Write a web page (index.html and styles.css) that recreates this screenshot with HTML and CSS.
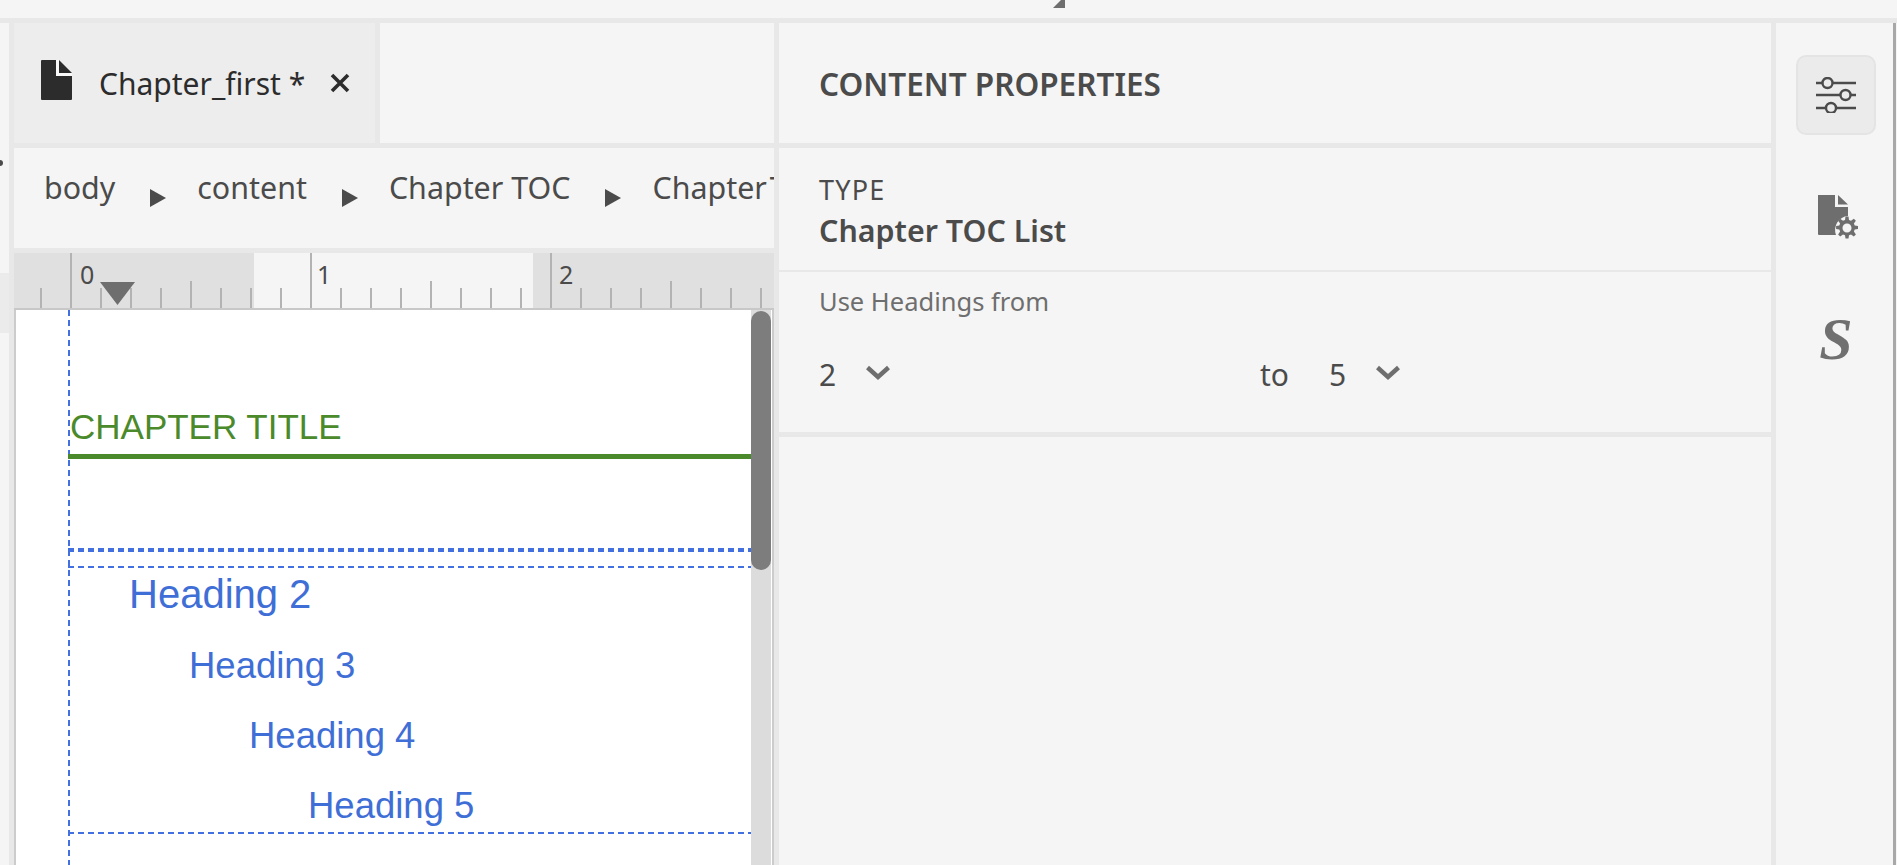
FILE: index.html
```html
<!DOCTYPE html>
<html lang="en">
<head>
<meta charset="utf-8">
<title>Chapter_first</title>
<link rel="stylesheet" href="styles.css">
</head>
<body>
<header class="topbar">
  <svg class="corner" width="12" height="8" viewBox="0 0 12 8"><path d="M0 8 8 0h4v8z" fill="#6e6e6e"/></svg>
</header>
<div class="workspace">
  <aside class="left-strip">
    <span class="strip-dot"></span>
    <div class="strip-dark"></div>
  </aside>
  <main class="editor">
    <div class="tabs">
      <div class="tab">
        <svg class="tab-icon" width="31" height="40" viewBox="0 0 31 40"><path d="M1 0h14v16h16v23a1 1 0 0 1-1 1H1a1 1 0 0 1-1-1V1a1 1 0 0 1 1-1z" fill="#2c2c2c"/><path d="M15 0h3v13h13v3H15z" fill="#fafafa"/><path d="M18 0l13 13H18z" fill="#2c2c2c"/></svg>
        <span class="tab-name">Chapter_first *</span>
        <svg class="tab-close" width="20" height="20" viewBox="0 0 20 20"><path d="M2 2l16 16M18 2 2 18" stroke="#2c2c2c" stroke-width="3.6" fill="none"/></svg>
      </div>
      <div class="tab-rest"></div>
    </div>
    <nav class="crumbs">
      <span>body</span><i class="tri"></i>
      <span>content</span><i class="tri"></i>
      <span>Chapter TOC</span><i class="tri"></i>
      <span class="crumb-last">Chapter TOC List</span>
    </nav>
    <svg class="ruler" width="760" height="57" viewBox="14 253 760 57">
      <rect x="14" y="253" width="760" height="57" fill="#e0e0e0"/>
      <rect x="254" y="253" width="279" height="55" fill="#f5f5f5"/>
      <rect x="14" y="308" width="760" height="2" fill="#c8c8c8"/>
      <g fill="#b3b3b3">
        <rect x="40" y="288" width="2" height="20"/><rect x="70" y="253" width="2" height="55"/><rect x="100" y="288" width="2" height="20"/><rect x="130" y="288" width="2" height="20"/><rect x="160" y="288" width="2" height="20"/><rect x="190" y="281" width="2" height="27"/><rect x="220" y="288" width="2" height="20"/><rect x="250" y="288" width="2" height="20"/><rect x="280" y="288" width="2" height="20"/><rect x="310" y="253" width="2" height="55"/><rect x="340" y="288" width="2" height="20"/><rect x="370" y="288" width="2" height="20"/><rect x="400" y="288" width="2" height="20"/><rect x="430" y="281" width="2" height="27"/><rect x="460" y="288" width="2" height="20"/><rect x="490" y="288" width="2" height="20"/><rect x="520" y="288" width="2" height="20"/><rect x="550" y="253" width="2" height="55"/><rect x="580" y="288" width="2" height="20"/><rect x="610" y="288" width="2" height="20"/><rect x="640" y="288" width="2" height="20"/><rect x="670" y="281" width="2" height="27"/><rect x="700" y="288" width="2" height="20"/><rect x="730" y="288" width="2" height="20"/><rect x="760" y="288" width="2" height="20"/>
      </g>
      <g class="ruler-num">
        <text x="80" y="284">0</text><text x="317" y="284">1</text><text x="559" y="284">2</text>
      </g>
      <path d="M100 282h35l-17.500 23z" fill="#6e6e6e"/>
    </svg>
    <div class="page-wrap">
      <article class="page">
        <div class="doc">
          <h1 class="chapter-title">CHAPTER TITLE</h1>
          <div class="thick-rule"></div>
          <div class="toc">
            <p class="h2">Heading 2</p>
            <p class="h3">Heading 3</p>
            <p class="h4">Heading 4</p>
            <p class="h5">Heading 5</p>
          </div>
        </div>
      </article>
      <div class="scrollbar"><div class="thumb"></div></div>
    </div>
  </main>
  <section class="props">
    <h2 class="props-head">CONTENT PROPERTIES</h2>
    <div class="props-type">
      <div class="type-label">TYPE</div>
      <div class="type-name">Chapter TOC List</div>
    </div>
    <div class="props-use">
      <div class="use-label">Use Headings from</div>
      <div class="use-row">
        <div class="pick pick-from"><span>2</span>
          <svg class="chev" width="26" height="15" viewBox="0 0 26 15"><path d="M2.500 2.500 13 12 23.500 2.500" stroke="#6e6e6e" stroke-width="4.400" fill="none"/></svg>
        </div>
        <span class="to">to</span>
        <div class="pick pick-to"><span>5</span>
          <svg class="chev" width="26" height="15" viewBox="0 0 26 15"><path d="M2.500 2.500 13 12 23.500 2.500" stroke="#6e6e6e" stroke-width="4.400" fill="none"/></svg>
        </div>
      </div>
    </div>
    <div class="props-rest"></div>
  </section>
  <aside class="rail">
    <button class="rail-btn is-active" type="button">
      <svg width="40" height="36" viewBox="0 0 40 36" fill="none" stroke="#4b4b4b" stroke-width="2.400"><path d="M0 6h6M17 6h23M0 18h24M35 18h5M0 31h9M20 31h20"/><circle cx="11.500" cy="6" r="5"/><circle cx="29.500" cy="18" r="5"/><circle cx="15" cy="31" r="5"/></svg>
    </button>
    <button class="rail-btn rail-doc" type="button">
      <svg width="40" height="45" viewBox="0 0 40 45"><path d="M0 0h17v12h13v9a14 14 0 0 0-12 19H1a1 1 0 0 1-1-1zM20 0l10 9.500H20z" fill="#6e6e6e"/><path transform="translate(1 1.500)" d="M26.500 20h3l.5 3.400 2 .8 2.800-2 2.100 2.100-2 2.800.8 2 3.300.5v3l-3.300.5-.8 2 2 2.800-2.100 2.100-2.800-2-2 .8-.5 3.200h-3l-.5-3.200-2-.8-2.800 2-2.100-2.100 2-2.800-.8-2-3.200-.5v-3l3.200-.5.8-2-2-2.800 2.100-2.100 2.800 2 2-.8zM28 27a4.500 4.500 0 1 0 0 9 4.500 4.500 0 0 0 0-9z" fill="#6e6e6e" fill-rule="evenodd"/></svg>
    </button>
    <button class="rail-btn rail-s" type="button">S</button>
  </aside>
  <div class="edge"></div>
  <div class="edge-end"></div>
</div>
</body>
</html>
```
FILE: styles.css
```css
* { box-sizing: border-box; }
html, body { margin: 0; height: 100%; }
body {
  width: 1897px; height: 865px; overflow: hidden;
  background: #e8e8e8; color: #4b4b4b;
  font-family: "Noto Sans", "Liberation Sans", sans-serif;
  display: flex; flex-direction: column;
}
.topbar {
  height: 18px; flex: none; background: #f5f5f5; margin-bottom: 5px;
  display: flex; justify-content: flex-start; padding-left: 1053px;
}
.workspace { flex: 1; display: flex; min-height: 0; }
.left-strip { width: 9px; flex: none; margin-right: 5px; background: #f5f5f5; display: flex; flex-direction: column; position: relative; }
.strip-dot { position: absolute; left: 0; top: 137px; width: 3px; height: 6px; background: #4b4b4b; border-radius: 0 3px 3px 0; }
.strip-dark { margin-top: 250px; height: 60px; background: #ebebeb; }

.editor { width: 760px; flex: none; display: flex; flex-direction: column; min-height: 0; }
.tabs { height: 120px; flex: none; display: flex; gap: 5px; margin-bottom: 5px; }
.tab { width: 361px; background: #ededed; display: flex; align-items: center; padding-left: 27px; }
.tab-icon { flex: none; margin: 0 27px 6px 0; }
.tab-name { font-size: 30px; color: #2c2c2c; width: 231px; flex: none; padding-top: 1px; }
.tab-close { flex: none; }
.tab-rest { flex: 1; background: #f5f5f5; }
.crumbs {
  height: 100px; flex: none; margin-bottom: 5px; background: #f5f5f5;
  display: flex; align-items: center; padding: 0 0 22px 30px; gap: 33px;
  overflow: hidden; white-space: nowrap; font-size: 30.4px; color: #4b4b4b;
}
.crumbs span { flex: none; }
.crumb-last { word-spacing: -5px; }
.tri { flex: none; width: 0; height: 0; margin: 22px -2px 0 2px; border-left: 16px solid #4b4b4b; border-top: 9px solid transparent; border-bottom: 9px solid transparent; }
.ruler { display: block; flex: none; }
.ruler-num { font-family: "Noto Sans", sans-serif; font-size: 25px; fill: #4b4b4b; }

.page-wrap { flex: 1; min-height: 0; display: flex; position: relative; background: #fff; border-left: 2px solid #ccc; border-right: 2px solid #ccc; }
.page { flex: 1; padding-left: 52px; overflow: hidden; }
.doc {
  min-height: 100%; padding-top: 97px; margin-right: 21px;
  background: repeating-linear-gradient(to bottom, #4270e0 0 6px, transparent 6px 10px) left top / 2px 100% no-repeat;
}
.chapter-title { margin: 0; padding-left: 2px; font: 400 35px/40px "Liberation Sans", Arial, sans-serif; color: #4b8a2b; }
.thick-rule { height: 5px; margin: 7px 0 107px; background: #4b8a2b; position: relative; }
.thick-rule::after { content: ""; position: absolute; left: 0; right: 0; top: 94px; height: 4px; background: repeating-linear-gradient(to right, #4270e0 0 6px, transparent 6px 10px); }
.toc {
  height: 268px; font-family: "Liberation Sans", Arial, sans-serif; color: #3f6fd6;
  background:
    repeating-linear-gradient(to right, #4270e0 0 6px, transparent 6px 10px) left top / 100% 2px no-repeat,
    repeating-linear-gradient(to right, #4270e0 0 6px, transparent 6px 10px) left bottom / 100% 2px no-repeat;
}
.toc p { margin: 0; white-space: nowrap; }
.h2 { font-size: 40px; line-height: 48px; padding: 4px 0 0 61px; }
.h3 { font-size: 36.5px; line-height: 42px; padding: 27px 0 0 121px; }
.h4 { font-size: 36.5px; line-height: 42px; padding: 28px 0 0 181px; }
.h5 { font-size: 36.5px; line-height: 42px; padding: 28px 0 0 240px; }
.scrollbar { position: absolute; right: 1px; top: 0; bottom: 0; width: 20px; background: #dcdcdc; }
.thumb { height: 259px; margin-top: 1px; background: #7d7d7d; border-radius: 10px; }

.props { width: 992px; flex: none; margin-left: 5px; display: flex; flex-direction: column; }
.props-head { height: 120px; margin: 0 0 5px; flex: none; background: #f5f5f5; display: flex; align-items: center; padding: 1px 0 0 40px; font-size: 31.500px; font-weight: 600; color: #4b4b4b; white-space: nowrap; }
.props-type { height: 124px; flex: none; background: #f5f5f5; padding: 24px 0 0 40px; border-bottom: 2px solid #e8e8e8; }
.type-label { font-size: 27px; line-height: 36px; letter-spacing: 1.200px; }
.type-name { font-size: 30.400px; font-weight: 600; line-height: 40px; margin-top: 3px; }
.props-use { height: 160px; flex: none; background: #f5f5f5; margin-bottom: 5px; padding: 11px 0 0 40px; }
.use-label { font-size: 25.500px; line-height: 36px; color: #6e6e6e; }
.use-row { display: flex; align-items: center; margin-top: 36px; font-size: 30px; line-height: 40px; }
.pick { display: flex; align-items: center; }
.chev { flex: none; margin-left: 29px; margin-top: -6px; }
.pick-from { width: 441px; }
.to { width: 69px; }
.props-rest { flex: 1; background: #f5f5f5; }

.rail { width: 117px; flex: none; margin-left: 5px; background: #f5f5f5; padding: 32px 0 0 20px; display: flex; flex-direction: column; }
.rail-btn { width: 80px; height: 80px; flex: none; padding: 0; margin: 0 0 42px; border: 2px solid transparent; border-radius: 10px; background: transparent; display: flex; align-items: center; justify-content: center; }
.rail-doc svg { margin-left: 3px; }
.rail-btn.is-active { background: #ebebeb; border-color: #e4e4e4; }
.rail-s { font: italic 700 60px/80px "Liberation Serif", serif; color: #707070; }
.edge { width: 3px; flex: none; background: #a8a8a8; }
.edge-end { flex: 1; background: #f5f5f5; }
```
